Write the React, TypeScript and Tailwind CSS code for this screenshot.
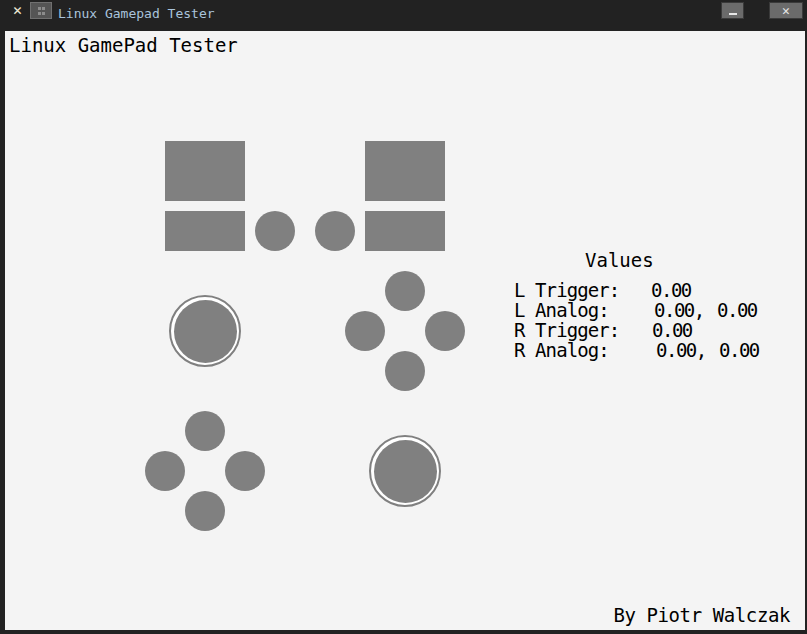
import React from 'react';

// [ 데이터 ]
const values = [
  { label: 'L Trigger:', w: 'w-[137px]', a: '0.00', b: null },
  { label: 'L Analog:', w: 'w-[140px]', a: '0.00,', b: '0.00' },
  { label: 'R Trigger:', w: 'w-[138px]', a: '0.00', b: null },
  { label: 'R Analog:', w: 'w-[142px]', a: '0.00,', b: '0.00' },
];

const Btn = () => <div className="w-[40px] h-[40px] rounded-full bg-[#808080]" />;

const Stick = () => (
  <div className="w-[120px] h-[120px] flex items-center justify-center">
    <div className="w-[72px] h-[72px] rounded-full border-2 border-[#808080] bg-white flex items-center justify-center">
      <div className="w-[63px] h-[63px] rounded-full bg-[#808080]" />
    </div>
  </div>
);

const Cross = () => (
  <div className="w-[120px] h-[120px] grid grid-cols-3 grid-rows-3">
    <div /><Btn /><div />
    <Btn /><div /><Btn />
    <div /><Btn /><div />
  </div>
);

export default function App() {
  return (
    <div className="w-[807px] h-[634px] bg-[#222222] flex flex-col">
      {/* 타이틀 바 */}
      <div className="h-[31px] flex items-start" style={{ fontFamily: '"DejaVu Sans Mono", monospace' }}>
        <div className="mt-[3px] ml-[9px] w-[17px] h-[15px] flex items-center justify-center text-[#ece6d2] text-[15px] font-bold leading-none">✕</div>
        <div className="mt-[2px] ml-[4px] w-[22px] h-[17px] bg-[#555555] border border-[#707070] grid grid-cols-[3px_3px] grid-rows-[3px_3px] gap-x-[1px] gap-y-[2px] place-content-center">
          <div className="bg-[#8c8c8c]" /><div className="bg-[#8c8c8c]" />
          <div className="bg-[#8c8c8c]" /><div className="bg-[#8c8c8c]" />
        </div>
        <div className="ml-[6px] mt-[6px] text-[13px] leading-[16px] text-[#a9c4dc]">Linux Gamepad Tester</div>
        <div className="flex-1" />
        <div className="mt-[2px] w-[23px] h-[17px] bg-[#6b6b6b] border border-[#3a3a3a] flex items-end justify-center pb-[3px]">
          <div className="w-[8px] h-[2px] bg-[#e6e6e6]" />
        </div>
        <div className="mt-[2px] ml-[25px] mr-[4px] w-[34px] h-[17px] bg-[#6b6b6b] border border-[#3a3a3a] flex items-center justify-center text-[#e6e6e6] text-[13px] font-bold leading-none">✕</div>
      </div>

      {/* 본문 */}
      <div className="ml-[5px] mr-[2px] mb-[4px] flex-1 bg-[#f4f4f4] flex flex-col text-black" style={{ fontFamily: '"DejaVu Sans Mono", monospace' }}>
        <div className="pt-[4px] pl-[4px] text-[19px] leading-[20px]">Linux GamePad Tester</div>

        <div className="mt-[86px] flex">
          {/* 게임패드 */}
          <div className="ml-[140px] w-[320px] flex flex-col">
            <div className="flex items-end px-[20px]">
              <div className="flex flex-col gap-[10px]">
                <div className="w-[80px] h-[60px] bg-[#808080]" />
                <div className="w-[80px] h-[40px] bg-[#808080]" />
              </div>
              <div className="ml-[10px]"><Btn /></div>
              <div className="ml-[20px]"><Btn /></div>
              <div className="ml-[10px] flex flex-col gap-[10px]">
                <div className="w-[80px] h-[60px] bg-[#808080]" />
                <div className="w-[80px] h-[40px] bg-[#808080]" />
              </div>
            </div>
            <div className="mt-[20px] flex gap-[80px]">
              <Stick />
              <Cross />
            </div>
            <div className="mt-[20px] flex gap-[80px]">
              <Cross />
              <Stick />
            </div>
          </div>

          {/* 값 */}
          <div className="ml-[49px] mt-[109px] flex flex-col text-[19px] leading-[20px]">
            <div className="pl-[71px] mb-[10px]">Values</div>
            {values.map((v) => (
              <div key={v.label} className="flex whitespace-pre">
                <div className={`${v.w} tracking-[-0.9px]`}>{v.label}</div>
                <div className="w-[63px] tracking-[-1.5px]">{v.a}</div>
                {v.b && <div className="tracking-[-1.5px]">{v.b}</div>}
              </div>
            ))}
          </div>
        </div>

        <div className="mt-auto pb-[5px] pr-[15px] text-right text-[19px] leading-[20px] tracking-[-0.4px]">By Piotr Walczak</div>
      </div>
    </div>
  );
}
